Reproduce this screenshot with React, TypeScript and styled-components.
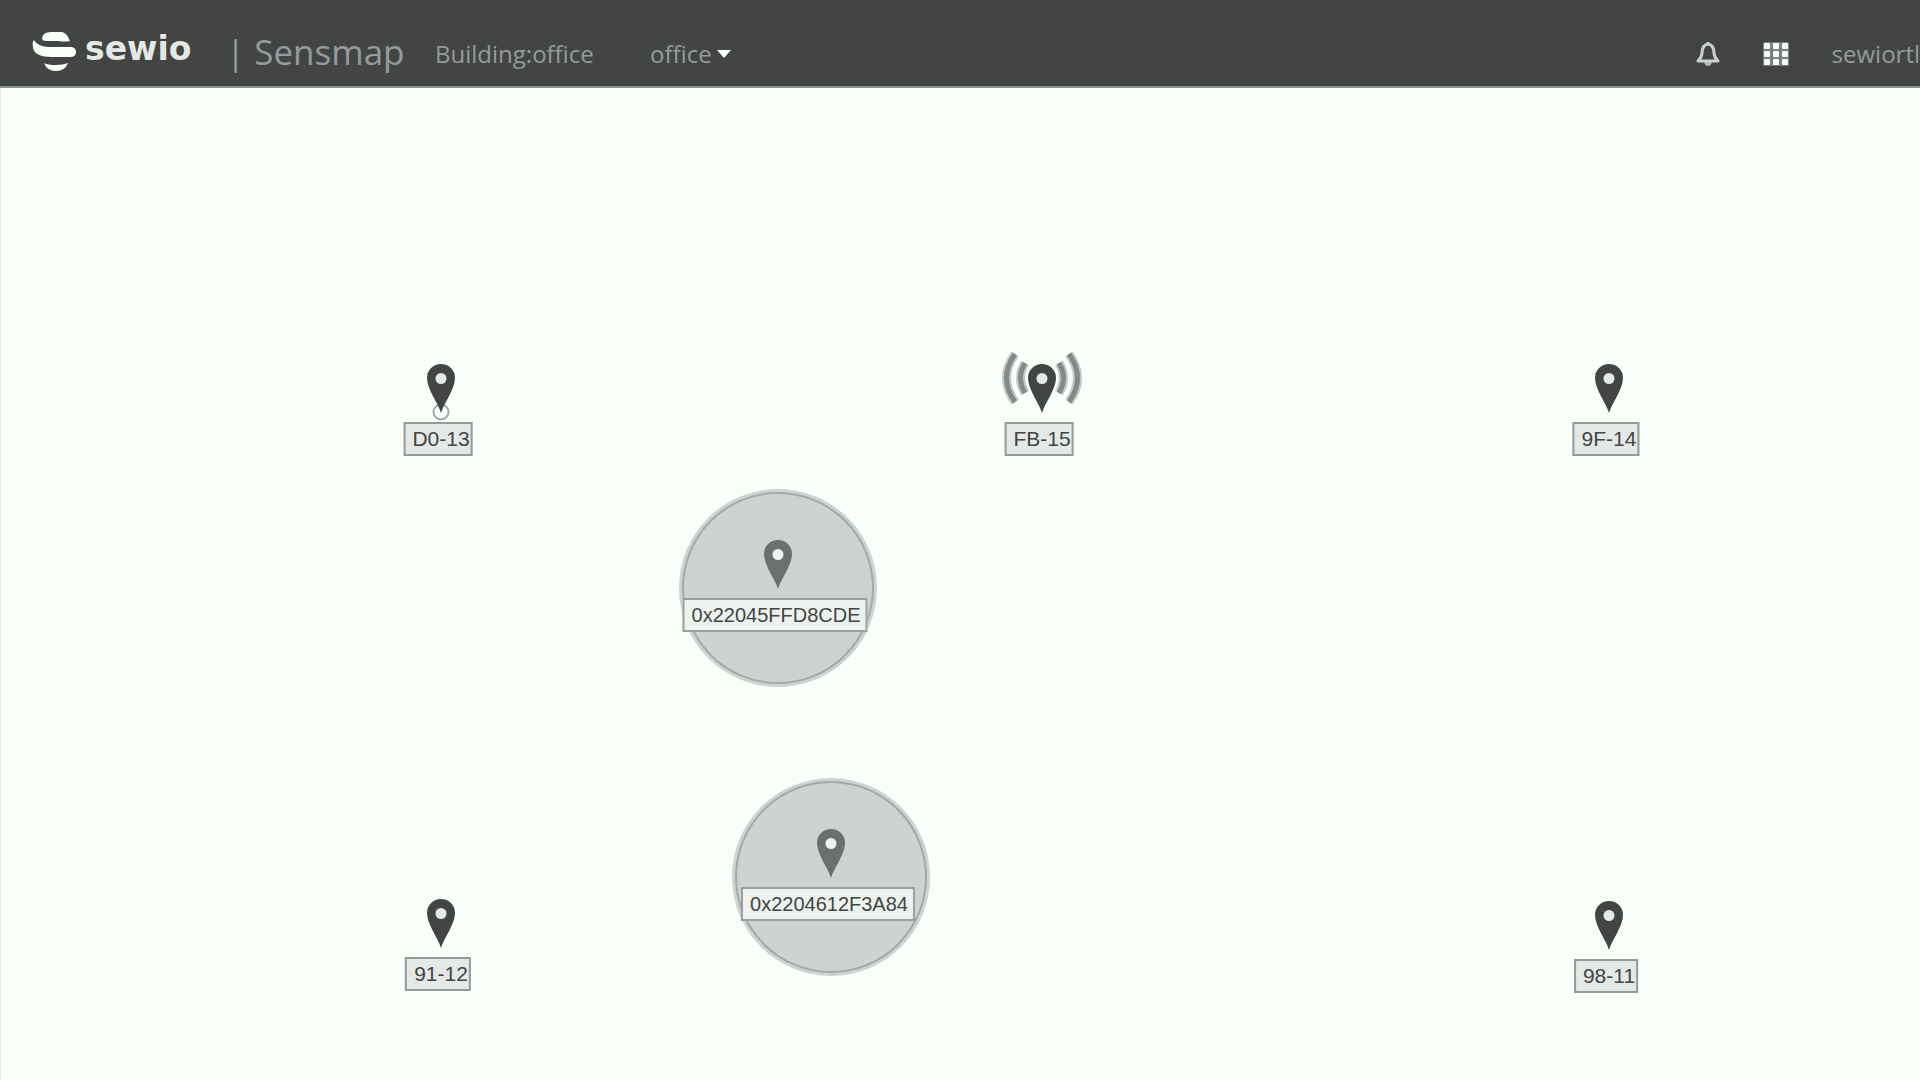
import React from "react";
import styled, { createGlobalStyle } from "styled-components";

const colors = {
  bar: "#424544",
  paper: "#f9fff9",
  muted: "#959b9a",
  line: "#8b9190",
  zone: "#cdd2d2",
  white: "#f9fff9",
};

const GlobalStyle = createGlobalStyle`
  * { box-sizing: border-box; }
  body {
    margin: 0;
    background: ${colors.paper};
    font-family: "Open Sans", "Noto Sans", sans-serif;
    overflow: hidden;
  }
`;

const Page = styled.div`
  display: flex;
  flex-direction: column;
  min-height: 100vh;
`;

const Navbar = styled.header`
  display: flex;
  align-items: center;
  height: 88px;
  padding-left: 32px;
  background: ${colors.bar};
  border-bottom: 2px solid ${colors.line};
  color: ${colors.muted};
`;

const Brand = styled.a`
  display: flex;
  align-items: center;
  gap: 8px;
  width: 194px;
  padding-top: 16px;
  color: ${colors.white};
  text-decoration: none;
`;

const Wordmark = styled.span`
  padding-bottom: 4px;
  color: #e4e9e5;
  font: bold 33px/40px "DejaVu Sans", sans-serif;
`;

const Title = styled.h1`
  display: flex;
  gap: 9px;
  margin: 0;
  padding-top: 18px;
  width: 209px;
  font-size: 35px;
  font-weight: 400;
  line-height: 44px;
`;

const Location = styled.span`
  width: 215px;
  padding-top: 22px;
  font-size: 24px;
  line-height: 32px;
`;

const PlanButton = styled.button`
  display: flex;
  align-items: center;
  gap: 5px;
  padding: 22px 0 0;
  border: 0;
  background: none;
  color: inherit;
  font: 24px/32px "Open Sans", "Noto Sans", sans-serif;
`;

const Actions = styled.nav`
  display: flex;
  align-items: center;
  gap: 43px;
  margin-left: auto;
  padding-top: 22px;
`;

const IconButton = styled.button`
  display: flex;
  padding: 0;
  border: 0;
  background: none;
`;

const UserLink = styled.a`
  color: inherit;
  font-size: 24px;
  line-height: 32px;
  text-decoration: none;
`;

const Map = styled.main`
  position: relative;
  flex: 1;
  border-left: 1px solid #e4e9e5;
`;

const Device = styled.div<{ $x: number; $y: number }>`
  position: absolute;
  left: ${(p) => p.$x}px;
  top: ${(p) => p.$y}px;
`;

const Drawing = styled.svg`
  position: absolute;
  left: -104px;
  top: -104px;
`;

const Label = styled.span<{ $tag: boolean }>`
  position: absolute;
  top: 10px;
  right: 0;
  transform: translateX(calc(50% - 3px));
  padding: ${(p) => (p.$tag ? "0 5px 0 7px" : "0 1px 0 7px")};
  border: 2px solid ${(p) => (p.$tag ? "#9a9f9e" : "#959b99")};
  background: ${(p) => (p.$tag ? "#edf2ee" : "#e4e8e6")};
  color: #424544;
  font-family: "Liberation Sans", Arial, sans-serif;
  font-size: ${(p) => (p.$tag ? 20 : 21)}px;
  line-height: 30px;
  white-space: nowrap;
`;

type Kind = "anchor" | "origin" | "master" | "tag";

const devices: { name: string; x: number; y: number; kind: Kind }[] = [
  { name: "D0-13", x: 440, y: 324, kind: "origin" },
  { name: "FB-15", x: 1041, y: 324, kind: "master" },
  { name: "9F-14", x: 1608, y: 324, kind: "anchor" },
  { name: "0x22045FFD8CDE", x: 777, y: 500, kind: "tag" },
  { name: "0x2204612F3A84", x: 830, y: 789, kind: "tag" },
  { name: "91-12", x: 440, y: 859, kind: "anchor" },
  { name: "98-11", x: 1608, y: 861, kind: "anchor" },
];

const WAVES =
  "M-27-58Q-44-34-27-10M27-58Q44-34 27-10M-17-49Q-26-34-17-19M17-49Q26-34 17-19";

const Marker = ({ kind }: { kind: Kind }) => (
  <Drawing width="208" height="208" viewBox="-104 -104 208 208" aria-hidden="true">
    {kind === "tag" && (
      <>
        <circle r="99" fill={colors.zone} />
        <circle r="95" fill="none" stroke="#a3a9a8" strokeWidth="2" />
      </>
    )}
    {kind === "master" && (
      <g fill="none">
        <path d={WAVES} stroke="#c4c9c7" strokeWidth="9" />
        <path d={WAVES} stroke="#858a88" strokeWidth="5" />
      </g>
    )}
    {kind === "origin" && <circle r="7.5" fill={colors.paper} stroke="#a3a9a8" strokeWidth="2" />}
    <path
      fill={kind === "tag" ? "#6b6f6e" : colors.bar}
      d="M0 1C-3-9-14-23-14-34A14 14 0 0 1 14-34C14-23 3-9 0 1Z"
    />
    <circle cy="-33.5" r="5.5" fill={kind === "tag" ? "#edf2ee" : "#e4e8e6"} />
  </Drawing>
);

const Logo = () => (
  <svg width="45" height="41" viewBox="0 0 45 41" fill={colors.white} aria-hidden="true">
    <path d="M10 7Q11 1 19 1H30Q35 2 38 10Q33 11 27 10H14Q10 10 10 7Z" />
    <path d="M2 9Q5 15 16 16H40Q44 17 44 21Q44 26 38 26H20Q3 26 1 17Q0 11 2 9Z" />
    <path d="M12 32Q16 34 24 34Q31 34 36 32Q33 40 24 40Q15 40 12 32Z" />
  </svg>
);

export default function App() {
  return (
    <Page>
      <GlobalStyle />
      <Navbar>
        <Brand href="#">
          <Logo />
          <Wordmark>sewio</Wordmark>
        </Brand>
        <Title>
          <span>|</span>
          <span>Sensmap</span>
        </Title>
        <Location>Building:office</Location>
        <PlanButton type="button">
          office
          <svg width="14" height="8" viewBox="0 0 14 8" aria-hidden="true">
            <path d="M0 0H14L7 8Z" fill={colors.white} />
          </svg>
        </PlanButton>
        <Actions>
          <IconButton type="button" aria-label="Notifications">
            <svg width="24" height="26" viewBox="0 0 24 26" fill="none" aria-hidden="true">
              <path
                d="M12 1V4M12 3C7 4 6 8 6 12C6 16 4 18 2 20H22C20 18 18 16 18 12C18 8 17 4 12 3Z"
                stroke="#cdd2cf"
                strokeWidth="3"
                strokeLinejoin="round"
              />
              <path d="M8 21H16Q15 25 12 25Q9 25 8 21Z" fill="#b5bab8" />
            </svg>
          </IconButton>
          <IconButton type="button" aria-label="Applications">
            <svg width="26" height="24" viewBox="0 0 26 24" aria-hidden="true">
              <rect width="26" height="24" rx="1" fill="#7b807e" />
              {[1, 10, 19].map((x) =>
                [1, 9, 17].map((y) => (
                  <rect key={`${x}-${y}`} x={x} y={y} width="6" height="6" rx="1" fill={colors.white} />
                )),
              )}
            </svg>
          </IconButton>
          <UserLink href="#">sewiortl</UserLink>
        </Actions>
      </Navbar>
      <Map>
        {devices.map((d) => (
          <Device key={d.name} $x={d.x} $y={d.y}>
            <Marker kind={d.kind} />
            <Label $tag={d.kind === "tag"}>{d.name}</Label>
          </Device>
        ))}
      </Map>
    </Page>
  );
}
